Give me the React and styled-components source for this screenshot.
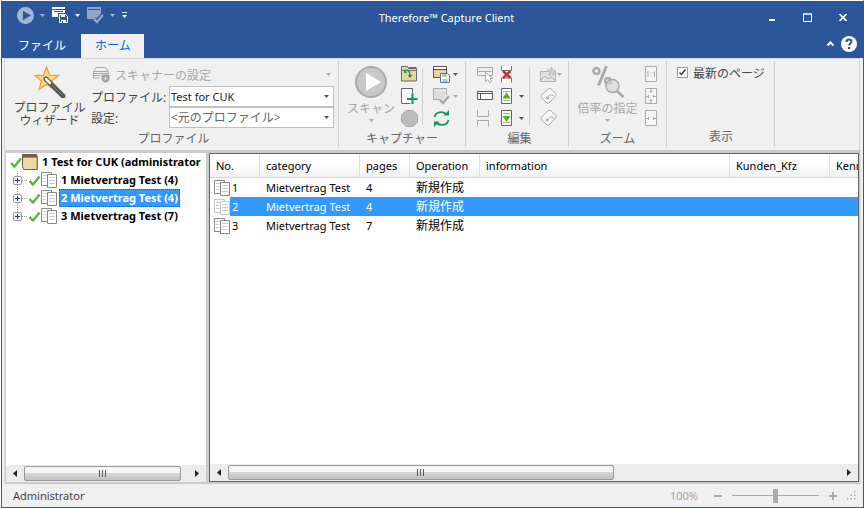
import React, { useState } from "react";
import styled, { createGlobalStyle } from "styled-components";

const Global = createGlobalStyle`
  * { box-sizing: border-box; }
  body { margin: 0; background: #fff; }
  body, button, select, input {
    font-family: "Noto Sans", "Noto Sans CJK JP", sans-serif;
    font-size: 12px;
    color: #444;
  }
  button { border: 0; padding: 0; background: none; cursor: pointer; }
  button:disabled { cursor: default; }
  svg { display: block; flex: none; }
`;

const Window = styled.div`
  display: flex;
  flex-direction: column;
  min-height: 100vh;
  border: 1px solid #0a62c4;
  border-top-color: #fff;
  margin-left: 1px;
  background: #f0f0f0;
`;

const Header = styled.header`
  background: #2b579a;
  color: #fff;
`;
const TitleBar = styled.div`
  display: flex;
  align-items: flex-start;
  height: 33px;
`;
const QuickAccess = styled.div`
  display: flex;
  align-items: center;
  width: 136px;
  height: 28px;
  padding-left: 15px;
  gap: 7px;
`;
const QuickButton = styled.button`
  display: flex;
  align-items: center;
  gap: 6px;
`;
const Title = styled.h1`
  flex: 1;
  margin: 0;
  text-align: center;
  font-size: 11px;
  font-weight: 400;
  line-height: 33px;
`;
const Controls = styled.div`
  display: flex;
  padding-right: 3px;
`;
const ControlButton = styled.button`
  display: grid;
  place-items: center;
  width: 35px;
  height: 33px;
`;
const TabBar = styled.div`
  display: flex;
  height: 24px;
`;
const Tab = styled.button`
  padding: ${(p) => (p.$active ? "0 13px 0 14px" : "0 15px 0 16px")};
  line-height: 24px;
  background: ${(p) => (p.$active ? "#f0f0f0" : "transparent")};
  color: ${(p) => (p.$active ? "#0a62d0" : "#fff")};
`;
const TabTools = styled.div`
  display: flex;
  align-items: center;
  gap: 6px;
  margin-left: auto;
  padding: 0 6px 4px 0;
`;

const Ribbon = styled.section`
  display: flex;
  margin: 0 3px 0 2px;
  padding: 2px 0 3px;
  border: 1px solid #d8d8d8;
  border-width: 1px 1px 0;
`;
const Group = styled.div`
  display: flex;
  flex-direction: column;
  height: 86px;
  padding: 2px ${(p) => p.$right}px 0 ${(p) => p.$left}px;
  border-right: 1px solid #d0d0d0;
`;
const GroupBody = styled.div`
  display: flex;
  height: 66px;
`;
const GroupLabel = styled.div`
  color: #666;
  text-align: center;
  line-height: 20px;
`;
const BigButton = styled.button`
  display: flex;
  flex-direction: column;
  align-items: center;
  width: ${(p) => p.$width}px;
  padding-top: 3px;
  line-height: 13px;
  color: ${(p) => (p.disabled ? "#a6a6a6" : "#444")};
`;
const BigText = styled.span`
  margin: ${(p) => (p.$tight ? 3 : 4)}px 0;
  white-space: nowrap;
`;
const Fields = styled.div`
  display: grid;
  grid-template-columns: 78px 165px;
  grid-auto-rows: 21px;
  align-items: center;
  margin-left: 5px;
  padding-top: 2px;
`;
const ScannerButton = styled.button`
  grid-column: span 2;
  display: flex;
  align-items: center;
  gap: 4px;
  padding: 0 3px 2px 2px;
  color: #a6a6a6;

  svg:last-child { margin-left: auto; }
`;
const FieldLabel = styled.label`
  white-space: nowrap;
`;
const SelectBox = styled.div`
  display: grid;
  grid-template-columns: 1fr 9px;
  align-items: center;
  height: 21px;
  border: 1px solid #c0c0c0;
  background: #fff;

  select {
    grid-area: 1 / 1 / 2 / 3;
    appearance: none;
    width: 100%;
    height: 19px;
    padding: 0 1px;
    border: 0;
    background: transparent;
    font-size: ${(p) => p.$size}px;
    color: ${(p) => (p.$size === 11 ? "#222" : "#666")};
  }
  svg { grid-area: 1 / 2; pointer-events: none; }
`;
const ToolColumn = styled.div`
  display: grid;
  grid-auto-rows: 22px;
  align-items: center;
  margin-left: ${(p) => p.$gap}px;
`;
const ToolButton = styled.button`
  display: flex;
  align-items: center;
  gap: ${(p) => p.$gap ?? 3}px;
`;
const Divider = styled.div`
  width: 1px;
  margin: 5px 0 4px ${(p) => p.$gap}px;
  background: #d0d0d0;
`;
const CheckLabel = styled.label`
  display: flex;
  align-items: center;
  gap: 5px;
  height: 19px;
  white-space: nowrap;
`;
const CheckWrap = styled.span`
  display: grid;
  width: 11px;
  height: 11px;

  input {
    grid-area: 1 / 1;
    appearance: none;
    width: 11px;
    height: 11px;
    margin: 0;
    border: 1px solid #999;
    background: #fff;
  }
  svg { grid-area: 1 / 1; pointer-events: none; visibility: hidden; }
  input:checked + svg { visibility: visible; }
`;

const Body = styled.main`
  flex: 1;
  display: flex;
  gap: 3px;
  margin: 0 2px;
  padding: 3px 1px 2px 1px;
  border: 1px solid #dcdcdc;
  border-width: 0 1px;
  background: #cbcbcb;
`;
const TreePane = styled.aside`
  display: flex;
  flex-direction: column;
  width: 200px;
  overflow: hidden;
  background: #fff;
`;
const Tree = styled.ul`
  flex: 1;
  margin: 0;
  padding: 0 0 0 4px;
  list-style: none;
  ul { margin: 0; padding: 0; list-style: none; }
`;
const TreeRow = styled.div`
  display: flex;
  align-items: center;
  height: 18px;
`;
const TreeLabel = styled.span`
  margin-left: 1px;
  padding: 0 1px;
  border: 1px ${(p) => (p.$selected ? "dotted #8a4a10" : "solid transparent")};
  background: ${(p) => (p.$selected ? "#3399ff" : "transparent")};
  color: ${(p) => (p.$selected ? "#fff" : "#000")};
  font-size: 11px;
  font-weight: 700;
  line-height: 16px;
  white-space: nowrap;
`;

const ListPane = styled.section`
  flex: 1;
  min-width: 0;
  display: flex;
  flex-direction: column;
  overflow: hidden;
  border: 1px solid #646464;
  background: #fff;
`;
const ListArea = styled.div`
  flex: 1;
  overflow: hidden;
`;
const Table = styled.table`
  width: 100%;
  table-layout: fixed;
  border-collapse: separate;
  border-spacing: 0;
  font-size: 11px;
  color: #000;
`;
const Col = styled.col`
  width: ${(p) => (p.$width ? p.$width + "px" : "auto")};
`;
const Th = styled.th`
  height: 24px;
  padding: 0 6px;
  border-right: 1px solid #dedfe1;
  border-bottom: 1px solid #d5d5d5;
  background: linear-gradient(#fff 40%, #f1f2f4);
  font-weight: 400;
  text-align: left;
  overflow: hidden;
  white-space: nowrap;

  &:last-child { border-right: 0; }
`;
const Row = styled.tr`
  color: ${(p) => (p.$selected ? "#fff" : "#000")};
  background: ${(p) =>
    p.$selected ? "linear-gradient(90deg, #fff 20px, #3399ff 20px)" : "none"};
`;
const Td = styled.td`
  height: 19px;
  padding: 0 6px;
  line-height: 18px;
  white-space: nowrap;
  font-size: ${(p) => (p.$cjk ? 12 : 11)}px;
`;
const NumberCell = styled.div`
  display: flex;
  align-items: center;
  gap: 1px;
  margin-left: -2px;
`;

const ScrollRow = styled.div`
  display: flex;
  align-items: center;
  height: 17px;
  background: #ececec;
`;
const ScrollArrow = styled.button`
  display: grid;
  place-items: center;
  width: 18px;
  height: 17px;
`;
const ScrollTrack = styled.div`
  flex: 1;
`;
const ScrollThumb = styled.div`
  display: grid;
  place-items: center;
  width: ${(p) => p.$portion}%;
  height: 15px;
  border: 1px solid #999;
  border-radius: 2px;
  background: linear-gradient(#f5f5f5 0 45%, #d6d6d9 50%, #c2c2c6);
`;

const StatusBar = styled.footer`
  display: flex;
  align-items: center;
  height: 23px;
  padding: 0 7px 0 11px;
  font-size: 11px;
`;
const ZoomTools = styled.div`
  display: flex;
  align-items: center;
  gap: 10px;
  margin-left: auto;
  color: #a6a6a6;
`;
const ZoomValue = styled.output`
  margin-right: 6px;
`;
const Slider = styled.input`
  appearance: none;
  width: 87px;
  height: 14px;
  margin: 0;
  background: linear-gradient(#aaa, #aaa) center / 100% 1px no-repeat;

  &::-webkit-slider-thumb {
    appearance: none;
    width: 5px;
    height: 14px;
    background: #aaa;
  }
`;

const Arrow = ({ color = "#555" }) => (
  <svg width="5" height="3" viewBox="0 0 5 3"><path d="M0 0h5L2.500 3z" fill={color} /></svg>
);

const PlayIcon = ({ size, ring, fill, mark }) => (
  <svg width={size} height={size} viewBox="0 0 32 32">
    <circle cx="16" cy="16" r="15" fill={fill} stroke={ring} strokeWidth="2" />
    <path d="M11 7v18l15-9z" fill={mark} />
  </svg>
);

const SaveWindowIcon = () => (
  <svg width="17" height="17" viewBox="0 0 17 17">
    <path d="M0 0h13v2H0zM0 3h13v7H0z" fill="#fff" />
    <path d="M2 4.500h9" stroke="#2b579a" />
    <path d="M6 6h11v11H6z" fill="#2b579a" />
    <path d="M7.500 7.500h6l2 2v6h-8z" fill="none" stroke="#fff" />
    <path d="M9 7h4v3H9zM9 13h5v3H9z" fill="#fff" />
    <path d="M10 14h1v2h-1z" fill="#2b579a" />
  </svg>
);

const CheckWindowIcon = ({ fill, stroke, bg }) => (
  <svg width="17" height="17" viewBox="0 0 17 17">
    <path d="M.5.500h13v11H.500z" fill={fill} stroke={stroke} />
    <path d="M1 2.500h12" stroke={bg} />
    <path d="M7 12l3 3 6-7" fill="none" stroke={bg} strokeWidth="5" />
    <path d="M7 12l3 3 6-7" fill="none" stroke={stroke} strokeWidth="2.500" />
  </svg>
);

const WandIcon = () => (
  <svg width="32" height="32" viewBox="0 0 32 32">
    <path d="M12.500 1l3.300 8.200 8.700.3-6.800 5.500 2.400 8.300-7.600-4.800-7.300 4.800 2.300-8.300L1 9.500l8.500-.3z" fill="#ffd978" stroke="#e8a33d" strokeWidth="1.300" />
    <path d="M12 13L29 30" stroke="#555" strokeWidth="5" strokeLinecap="round" />
    <path d="M12 13l4 4" stroke="#fff" strokeWidth="2.500" strokeLinecap="round" />
    <path d="M18 19l10 10" stroke="#888" strokeWidth="1" />
  </svg>
);

const ScannerIcon = () => (
  <svg width="18" height="16" viewBox="0 0 18 16" fill="none" stroke="#a6a6a6">
    <path d="M3.500.500h9l3 4v2H.500v-2zM1 4.500h14M.5 8.500h7M.5 6v5h6" />
    <path d="M9 8h7v5l-2 2h-3l-2-2z" fill="#a6a6a6" />
    <circle cx="12.500" cy="11.500" r="1.500" fill="#f0f0f0" />
  </svg>
);

const FolderIcon = () => (
  <svg width="17" height="16" viewBox="0 0 17 16">
    <path d="M.5 15V.500h6l1 2h8V15z" fill="#ecd29b" stroke="#666" />
    <path d="M1 4.500h15M7.500 1.500h8" stroke="#777" />
    <path d="M4 5c3-2 5 0 5 5" fill="none" stroke="#16965a" strokeWidth="1.500" />
    <path d="M6.500 9h5L9 12zM3 3v4h3z" fill="#16965a" />
  </svg>
);

const AddPageIcon = () => (
  <svg width="17" height="17" viewBox="0 0 17 17">
    <path d="M.5.500h11v15H.500z" fill="#fff" stroke="#666" />
    <path d="M6 11h11M11.500 5.500v11" stroke="#f0f0f0" strokeWidth="4" />
    <path d="M6 11h10.500M11.500 5.500V16" stroke="#16965a" strokeWidth="2" />
  </svg>
);

const StopIcon = () => (
  <svg width="17" height="17" viewBox="0 0 17 17">
    <path d="M5 .5h7L16.500 5v7L12 16.500H5L.5 12V5z" fill="#bcbcbc" stroke="#aaa" />
  </svg>
);

const SaveBatchIcon = () => (
  <svg width="17" height="17" viewBox="0 0 17 17">
    <path d="M.5.500h13v11H.500z" fill="#ecd29b" stroke="#555" />
    <path d="M1 1h12v2H1z" fill="#fff" />
    <path d="M.5 3.500h13" stroke="#555" />
    <path d="M7.500 7.500h7l2 2v7h-9z" fill="#fff" stroke="#5f7087" />
    <path d="M9 8h5v3H9zM9.500 13h5v3h-5z" fill="#b8c4d6" />
  </svg>
);

const RefreshIcon = () => (
  <svg width="17" height="17" viewBox="0 0 17 17" fill="none" stroke="#16965a" strokeWidth="1.800">
    <path d="M1.500 7C2.500 2 9 .500 13 4M15.500 10C14.500 15 8 16.500 4 13" />
    <path d="M10.500 5.500h5.500V0zM6.500 11.500H1V17z" fill="#16965a" stroke="none" />
  </svg>
);

const SelectIcon = () => (
  <svg width="17" height="17" viewBox="0 0 17 17">
    <path d="M.5 1.500h15v8H.500zM.5 5.500h15" fill="none" stroke="#aaa" />
    <path d="M8.500 6.500v9l2.500-2 1.500 3 2-1-1.500-3h3z" fill="#fff" stroke="#aaa" />
  </svg>
);

const DeletePageIcon = () => (
  <svg width="12" height="17" viewBox="0 0 12 17">
    <path d="M.5 0v4.500h10V0M.5 16.500v-4.500h10v4.500" fill="#fff" stroke="#777" />
    <path d="M2 5l7.500 7M9.500 5L2 12" stroke="#cf2a27" strokeWidth="2.400" />
  </svg>
);

const RenameIcon = () => (
  <svg width="17" height="10" viewBox="0 0 17 10">
    <path d="M.5.500h15v8H.500z" fill="#fff" stroke="#555" />
    <path d="M1 2.500h15M3.500 3v5" stroke="#555" />
  </svg>
);

const SplitIcon = () => (
  <svg width="13" height="17" viewBox="0 0 13 17" fill="none" stroke="#aaa">
    <path d="M.5 0v6.500h11V0M.5 16.500v-6h11v6" />
  </svg>
);

const MovePageIcon = ({ down }) => (
  <svg width="12" height="17" viewBox="0 0 12 17">
    <path d="M.5.500h10v15H.500z" fill="#fff" stroke="#666" />
    <path d="M2 3.500h7M2 12.500h7" stroke="#aaa" />
    <path d={down ? "M1.500 6h8L5.500 12z" : "M1.500 10.500h8L5.500 4z"} fill="#50b516" />
  </svg>
);

const PictureIcon = () => (
  <svg width="17" height="17" viewBox="0 0 17 17" fill="#e2e2e2" stroke="#b0b0b0">
    <path d="M.5 5.500h15v10H.500z" />
    <path d="M1 14l4-4 3 3 3-2 4 3" fill="none" />
    <path d="M11.500 1l1.300 3 3.200.5-2.500 2 .5 3-2.500-1.500L9 9.500l.5-3-2.500-2 3.200-.5z" fill="#ccc" stroke="#c0c0c0" />
  </svg>
);

const RotateIcon = () => (
  <svg width="17" height="16" viewBox="0 0 17 16" fill="none" stroke="#aaa">
    <path d="M8.500.500h2l5.500 5v2l-7 7.500h-2l-6-5.500v-2z" fill="#f6f6f6" />
    <path d="M7.500 10c1-3 4-4 6.500-2" />
    <path d="M6 8.500l.5 3 3-1.500z" fill="#999" stroke="none" />
  </svg>
);

const PercentIcon = () => (
  <svg width="32" height="32" viewBox="0 0 32 32" fill="none" stroke="#aaa">
    <circle cx="4.500" cy="5" r="3" strokeWidth="2.500" />
    <circle cx="16" cy="15" r="3" strokeWidth="2.500" />
    <path d="M14.500 0L6.500 19.500" strokeWidth="3" />
    <circle cx="20.500" cy="20" r="6.500" fill="#d8d8d8" fillOpacity=".7" strokeWidth="1.500" />
    <path d="M25 25l6.500 6" strokeWidth="2.500" />
  </svg>
);

const ZoomPageIcon = ({ kind }) => (
  <svg width="13" height="17" viewBox="0 0 13 17" fill="none" stroke="#aaa">
    <path d="M.5.500h11v15H.500z" fill="#f6f6f6" />
    {kind === "one" && <path d="M2 6.500l1-1V11M8.500 6.500l1-1V11M6 6.500v1M6 9.500v1" />}
    {kind !== "one" && <path d="M1 8.500h3M8 8.500h3M3.500 7v3M8.500 7v3" />}
    {kind === "page" && <path d="M6 1v4M6 11v4M4.500 3.500h3M4.500 12.500h3" />}
  </svg>
);

const GreenCheck = ({ width = 12 }) => (
  <svg width={width} height="11" viewBox="0 0 12 11">
    <path d="M1 6l3.500 3.500L11 1.500" fill="none" stroke="#55b82e" strokeWidth="2.400" />
  </svg>
);

const BoxIcon = () => (
  <svg width="17" height="16" viewBox="0 0 17 16">
    <path d="M.5.500h14l1 3v12H1.500l-1-3z" fill="#f0d8a6" stroke="#6d5e48" />
    <path d="M1 1h14v2H1z" fill="#6b6257" />
    <path d="M1 3.500h14v12" fill="none" stroke="#9b8866" />
  </svg>
);

const PagesIcon = ({ faded }) => (
  <svg width="17" height="16" viewBox="0 0 17 16" fill="#fff" stroke={faded ? "#c4c4c4" : "#888"}>
    <path d="M.5.500h10v13H.500z" />
    <path d="M2 3.500h4M2 6.500h3M2 9.500h3" stroke="#ccc" />
    <path d="M6.500 2.500h9v13h-9z" />
    <path d="M8 5.500h6M8 8.500h6M8 11.500h6" stroke="#ccc" />
  </svg>
);

const ExpanderIcon = ({ last }) => (
  <svg width="18" height="18" viewBox="0 0 18 18">
    <path d={last ? "M7.500 0v9" : "M7.500 0v18"} stroke="#999" strokeDasharray="1 1" />
    <path d="M12 9.500h6" stroke="#999" strokeDasharray="1 1" />
    <rect x="3.500" y="5.500" width="8" height="8" rx="1" fill="#f5f5f5" stroke="#999" />
    <path d="M5 9.500h5M7.500 7v5" stroke="#23399b" />
  </svg>
);

const SideArrow = ({ right }) => (
  <svg width="5" height="7" viewBox="0 0 5 7">
    <path d={right ? "M0 0v7l4-3.500z" : "M4 0v7L0 3.500z"} fill="#222" />
  </svg>
);

const GripIcon = () => (
  <svg width="9" height="9" viewBox="0 0 9 9" fill="#aaa">
    <path d="M7 0h1.500v1.500H7zM3.500 3.500h1.500v1.500H3.500zM7 3.500h1.500v1.500H7zM0 7h1.500v1.500H0zM3.500 7h1.500v1.500H3.500zM7 7h1.500v1.500H7z" />
  </svg>
);

const HelpIcon = () => (
  <svg width="16" height="16" viewBox="0 0 16 16">
    <circle cx="8" cy="8" r="8" fill="#fff" />
    <path d="M5.500 6c0-3.500 5-3.300 5-.5 0 1.700-2.300 1.800-2.300 4" fill="none" stroke="#2b579a" strokeWidth="2" />
    <path d="M7 11h2.200v2H7z" fill="#2b579a" />
  </svg>
);

const columns = [
  ["No.", 50],
  ["category", 100],
  ["pages", 50],
  ["Operation", 70],
  ["information", 250],
  ["Kunden_Kfz", 100],
  ["Kenn", 0],
];
const documents = [
  { no: 1, name: "Mietvertrag Test", pages: 4 },
  { no: 2, name: "Mietvertrag Test", pages: 4 },
  { no: 3, name: "Mietvertrag Test", pages: 7 },
];

function ScrollBar({ portion }) {
  return (
    <ScrollRow>
      <ScrollArrow aria-label="左へ"><SideArrow /></ScrollArrow>
      <ScrollTrack>
        <ScrollThumb $portion={portion}>
          <svg width="9" height="7" viewBox="0 0 9 7" stroke="#555"><path d="M1.500 0v7M4.500 0v7M7.500 0v7" /></svg>
        </ScrollThumb>
      </ScrollTrack>
      <ScrollArrow aria-label="右へ"><SideArrow right /></ScrollArrow>
    </ScrollRow>
  );
}

function AppHeader() {
  return (
    <Header>
      <TitleBar>
        <QuickAccess>
          <QuickButton aria-label="スキャン" disabled>
            <PlayIcon size={17} ring="#a3b5d2" fill="#a3b5d2" mark="#2b579a" />
            <Arrow color="#a3b5d2" />
          </QuickButton>
          <QuickButton aria-label="保存"><SaveWindowIcon /><Arrow color="#fff" /></QuickButton>
          <QuickButton aria-label="確認" disabled>
            <CheckWindowIcon fill="#8fa5ca" stroke="#8fa5ca" bg="#2b579a" />
            <Arrow color="#a3b5d2" />
          </QuickButton>
          <QuickButton aria-label="クイックアクセスのカスタマイズ">
            <svg width="5" height="6" viewBox="0 0 5 6" fill="#fff"><path d="M0 0h5v1H0zM0 3h5L2.500 6z" /></svg>
          </QuickButton>
        </QuickAccess>
        <Title>Therefore™ Capture Client</Title>
        <Controls>
          <ControlButton aria-label="最小化">
            <svg width="9" height="9" viewBox="0 0 9 9"><path d="M1 6h6v2H1z" fill="#fff" /></svg>
          </ControlButton>
          <ControlButton aria-label="最大化">
            <svg width="9" height="9" viewBox="0 0 9 9"><path d="M.5 1h8v7.500h-8zM0 1h9" fill="none" stroke="#fff" /></svg>
          </ControlButton>
          <ControlButton aria-label="閉じる">
            <svg width="8" height="7" viewBox="0 0 8 7"><path d="M.5 0l7 7M7.500 0l-7 7" stroke="#fff" strokeWidth="1.700" /></svg>
          </ControlButton>
        </Controls>
      </TitleBar>
      <TabBar>
        <Tab>ファイル</Tab>
        <Tab $active>ホーム</Tab>
        <TabTools>
          <button aria-label="リボンを折りたたむ">
            <svg width="9" height="6" viewBox="0 0 9 6"><path d="M1.500 4.500l3-3 3 3" fill="none" stroke="#fff" strokeWidth="2" /></svg>
          </button>
          <button aria-label="ヘルプ"><HelpIcon /></button>
        </TabTools>
      </TabBar>
    </Header>
  );
}

function AppRibbon() {
  const [latest, setLatest] = useState(true);
  return (
    <Ribbon>
      <Group $left={8} $right={4}>
        <GroupBody>
          <BigButton $width={73}>
            <WandIcon />
            <BigText $tight>プロファイル<br />ウィザード</BigText>
          </BigButton>
          <Fields>
            <ScannerButton disabled><ScannerIcon />スキャナーの設定<Arrow color="#aaa" /></ScannerButton>
            <FieldLabel htmlFor="profile">プロファイル:</FieldLabel>
            <SelectBox $size={11}>
              <select id="profile"><option>Test for CUK</option></select>
              <Arrow />
            </SelectBox>
            <FieldLabel htmlFor="setting">設定:</FieldLabel>
            <SelectBox $size={12}>
              <select id="setting"><option>&lt;元のプロファイル&gt;</option></select>
              <Arrow />
            </SelectBox>
          </Fields>
        </GroupBody>
        <GroupLabel>プロファイル</GroupLabel>
      </Group>

      <Group $left={7} $right={7}>
        <GroupBody>
          <BigButton $width={50} disabled>
            <PlayIcon size={32} ring="#aaa" fill="#c8c8c8" mark="#fff" />
            <BigText>スキャン</BigText>
            <Arrow color="#aaa" />
          </BigButton>
          <ToolColumn $gap={5}>
            <ToolButton aria-label="読み込み"><FolderIcon /></ToolButton>
            <ToolButton aria-label="ページの追加"><AddPageIcon /></ToolButton>
            <ToolButton aria-label="停止" disabled><StopIcon /></ToolButton>
          </ToolColumn>
          <Divider $gap={4} />
          <ToolColumn $gap={10}>
            <ToolButton aria-label="保存"><SaveBatchIcon /><Arrow /></ToolButton>
            <ToolButton aria-label="確認" disabled>
              <CheckWindowIcon fill="#ddd" stroke="#aaa" bg="#f0f0f0" /><Arrow color="#aaa" />
            </ToolButton>
            <ToolButton aria-label="更新"><RefreshIcon /></ToolButton>
          </ToolColumn>
        </GroupBody>
        <GroupLabel>キャプチャー</GroupLabel>
      </Group>

      <Group $left={11} $right={6}>
        <GroupBody>
          <ToolColumn $gap={0}>
            <ToolButton aria-label="選択" disabled><SelectIcon /></ToolButton>
            <ToolButton aria-label="名前"><RenameIcon /></ToolButton>
            <ToolButton aria-label="分割" disabled><SplitIcon /></ToolButton>
          </ToolColumn>
          <ToolColumn $gap={7}>
            <ToolButton aria-label="ページの削除"><DeletePageIcon /></ToolButton>
            <ToolButton aria-label="上へ移動" $gap={6}><MovePageIcon /><Arrow /></ToolButton>
            <ToolButton aria-label="下へ移動" $gap={6}><MovePageIcon down /><Arrow /></ToolButton>
          </ToolColumn>
          <Divider $gap={5} />
          <ToolColumn $gap={10}>
            <ToolButton aria-label="画像" $gap={0} disabled><PictureIcon /><Arrow color="#aaa" /></ToolButton>
            <ToolButton aria-label="左へ回転" disabled><RotateIcon /></ToolButton>
            <ToolButton aria-label="右へ回転" disabled><RotateIcon /></ToolButton>
          </ToolColumn>
        </GroupBody>
        <GroupLabel>編集</GroupLabel>
      </Group>

      <Group $left={8} $right={8}>
        <GroupBody>
          <BigButton $width={61} disabled>
            <PercentIcon />
            <BigText>倍率の指定</BigText>
            <Arrow color="#aaa" />
          </BigButton>
          <ToolColumn $gap={7}>
            <ToolButton aria-label="実寸" disabled><ZoomPageIcon kind="one" /></ToolButton>
            <ToolButton aria-label="ページに合わせる" disabled><ZoomPageIcon kind="page" /></ToolButton>
            <ToolButton aria-label="幅に合わせる" disabled><ZoomPageIcon kind="width" /></ToolButton>
          </ToolColumn>
        </GroupBody>
        <GroupLabel>ズーム</GroupLabel>
      </Group>

      <Group $left={10} $right={9}>
        <GroupBody>
          <CheckLabel>
            <CheckWrap>
              <input type="checkbox" checked={latest} onChange={(e) => setLatest(e.target.checked)} />
              <svg width="11" height="11" viewBox="0 0 11 11"><path d="M2.500 5.500l2 2 4-5" fill="none" stroke="#333" strokeWidth="1.300" /></svg>
            </CheckWrap>
            最新のページ
          </CheckLabel>
        </GroupBody>
        <GroupLabel>表示</GroupLabel>
      </Group>
    </Ribbon>
  );
}

export default function App() {
  const [selected, setSelected] = useState(2);
  const [zoom, setZoom] = useState(100);
  return (
    <Window>
      <Global />
      <AppHeader />
      <AppRibbon />
      <Body>
        <TreePane>
          <Tree>
            <li>
              <TreeRow>
                <GreenCheck /><BoxIcon />
                <TreeLabel>1 Test for CUK (administrator</TreeLabel>
              </TreeRow>
              <ul>
                {documents.map((d) => (
                  <li key={d.no}>
                    <TreeRow onClick={() => setSelected(d.no)}>
                      <button aria-label="展開"><ExpanderIcon last={d.no === 3} /></button>
                      <GreenCheck width={13} />
                      <PagesIcon />
                      <TreeLabel $selected={selected === d.no}>
                        {d.no} {d.name} ({d.pages})
                      </TreeLabel>
                    </TreeRow>
                  </li>
                ))}
              </ul>
            </li>
          </Tree>
          <ScrollBar portion={96} />
        </TreePane>
        <ListPane>
          <ListArea>
            <Table>
              <colgroup>{columns.map(([name, width]) => <Col key={name} $width={width} />)}</colgroup>
              <thead>
                <tr>{columns.map(([name]) => <Th key={name} scope="col">{name}</Th>)}</tr>
              </thead>
              <tbody>
                {documents.map((d) => (
                  <Row key={d.no} $selected={selected === d.no} onClick={() => setSelected(d.no)}>
                    <Td><NumberCell><PagesIcon faded={selected === d.no} />{d.no}</NumberCell></Td>
                    <Td>{d.name}</Td>
                    <Td>{d.pages}</Td>
                    <Td $cjk>新規作成</Td>
                    <Td /><Td /><Td />
                  </Row>
                ))}
              </tbody>
            </Table>
          </ListArea>
          <ScrollBar portion={63} />
        </ListPane>
      </Body>
      <StatusBar>
        Administrator
        <ZoomTools>
          <ZoomValue htmlFor="zoom">{zoom}%</ZoomValue>
          <button aria-label="縮小" onClick={() => setZoom(Math.max(0, zoom - 10))}>
            <svg width="8" height="8" viewBox="0 0 8 8"><path d="M0 4h8" stroke="#aaa" strokeWidth="2" /></svg>
          </button>
          <Slider id="zoom" type="range" aria-label="ズーム" min="0" max="200" value={zoom} onChange={(e) => setZoom(+e.target.value)} />
          <button aria-label="拡大" onClick={() => setZoom(Math.min(200, zoom + 10))}>
            <svg width="8" height="8" viewBox="0 0 8 8"><path d="M0 4h8M4 0v8" stroke="#aaa" strokeWidth="2" /></svg>
          </button>
          <GripIcon />
        </ZoomTools>
      </StatusBar>
    </Window>
  );
}
